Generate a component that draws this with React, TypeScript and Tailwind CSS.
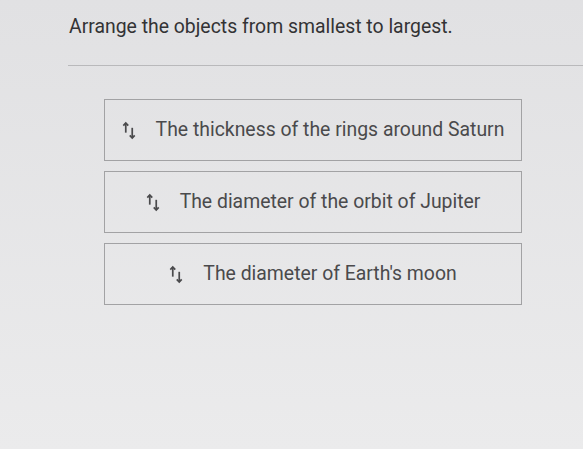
import React from "react";

const SortIcon = () => (
  <svg
    className="w-[14px] h-[19px] shrink-0"
    viewBox="0 0 13 17"
    fill="none"
    stroke="currentColor"
    strokeWidth="1.6"
    xmlns="http://www.w3.org/2000/svg"
  >
    <path d="M3.5 1.5v9" />
    <path d="M1.2 4l2.3-2.5L5.8 4" />
    <path d="M9.5 6v9.5" />
    <path d="M7.2 13l2.3 2.5 2.3-2.5" />
  </svg>
);

const App = () => {
  // items in the order shown on screen
  const items = [
    "The thickness of the rings around Saturn",
    "The diameter of the orbit of Jupiter",
    "The diameter of Earth's moon",
  ];

  return (
    <div
      className="w-[583px] h-[449px] bg-gradient-to-b from-[#e1e1e3] to-[#ebebec] text-[#3c3c3e] overflow-hidden"
      style={{ fontFamily: "Roboto, 'Liberation Sans', sans-serif" }}
    >
      <div className="pl-[69px] pt-[13px]">
        <h1 className="text-[19.4px] leading-[28px] text-[#333335]">
          Arrange the objects from smallest to largest.
        </h1>
      </div>
      <div className="ml-[68px] mt-[24px] h-px bg-[#b9b9bb]" />

      <div className="ml-[104px] mt-[33px] w-[418px] flex flex-col gap-[10px]">
        {items.map((item) => (
          <div
            key={item}
            className="h-[62px] border border-[#a2a2a4] flex items-center justify-center gap-[20px] text-[#4a4a4c]"
          >
            <SortIcon />
            <span className="text-[19.4px] leading-[24px]">{item}</span>
          </div>
        ))}
      </div>
    </div>
  );
};

export default App;
